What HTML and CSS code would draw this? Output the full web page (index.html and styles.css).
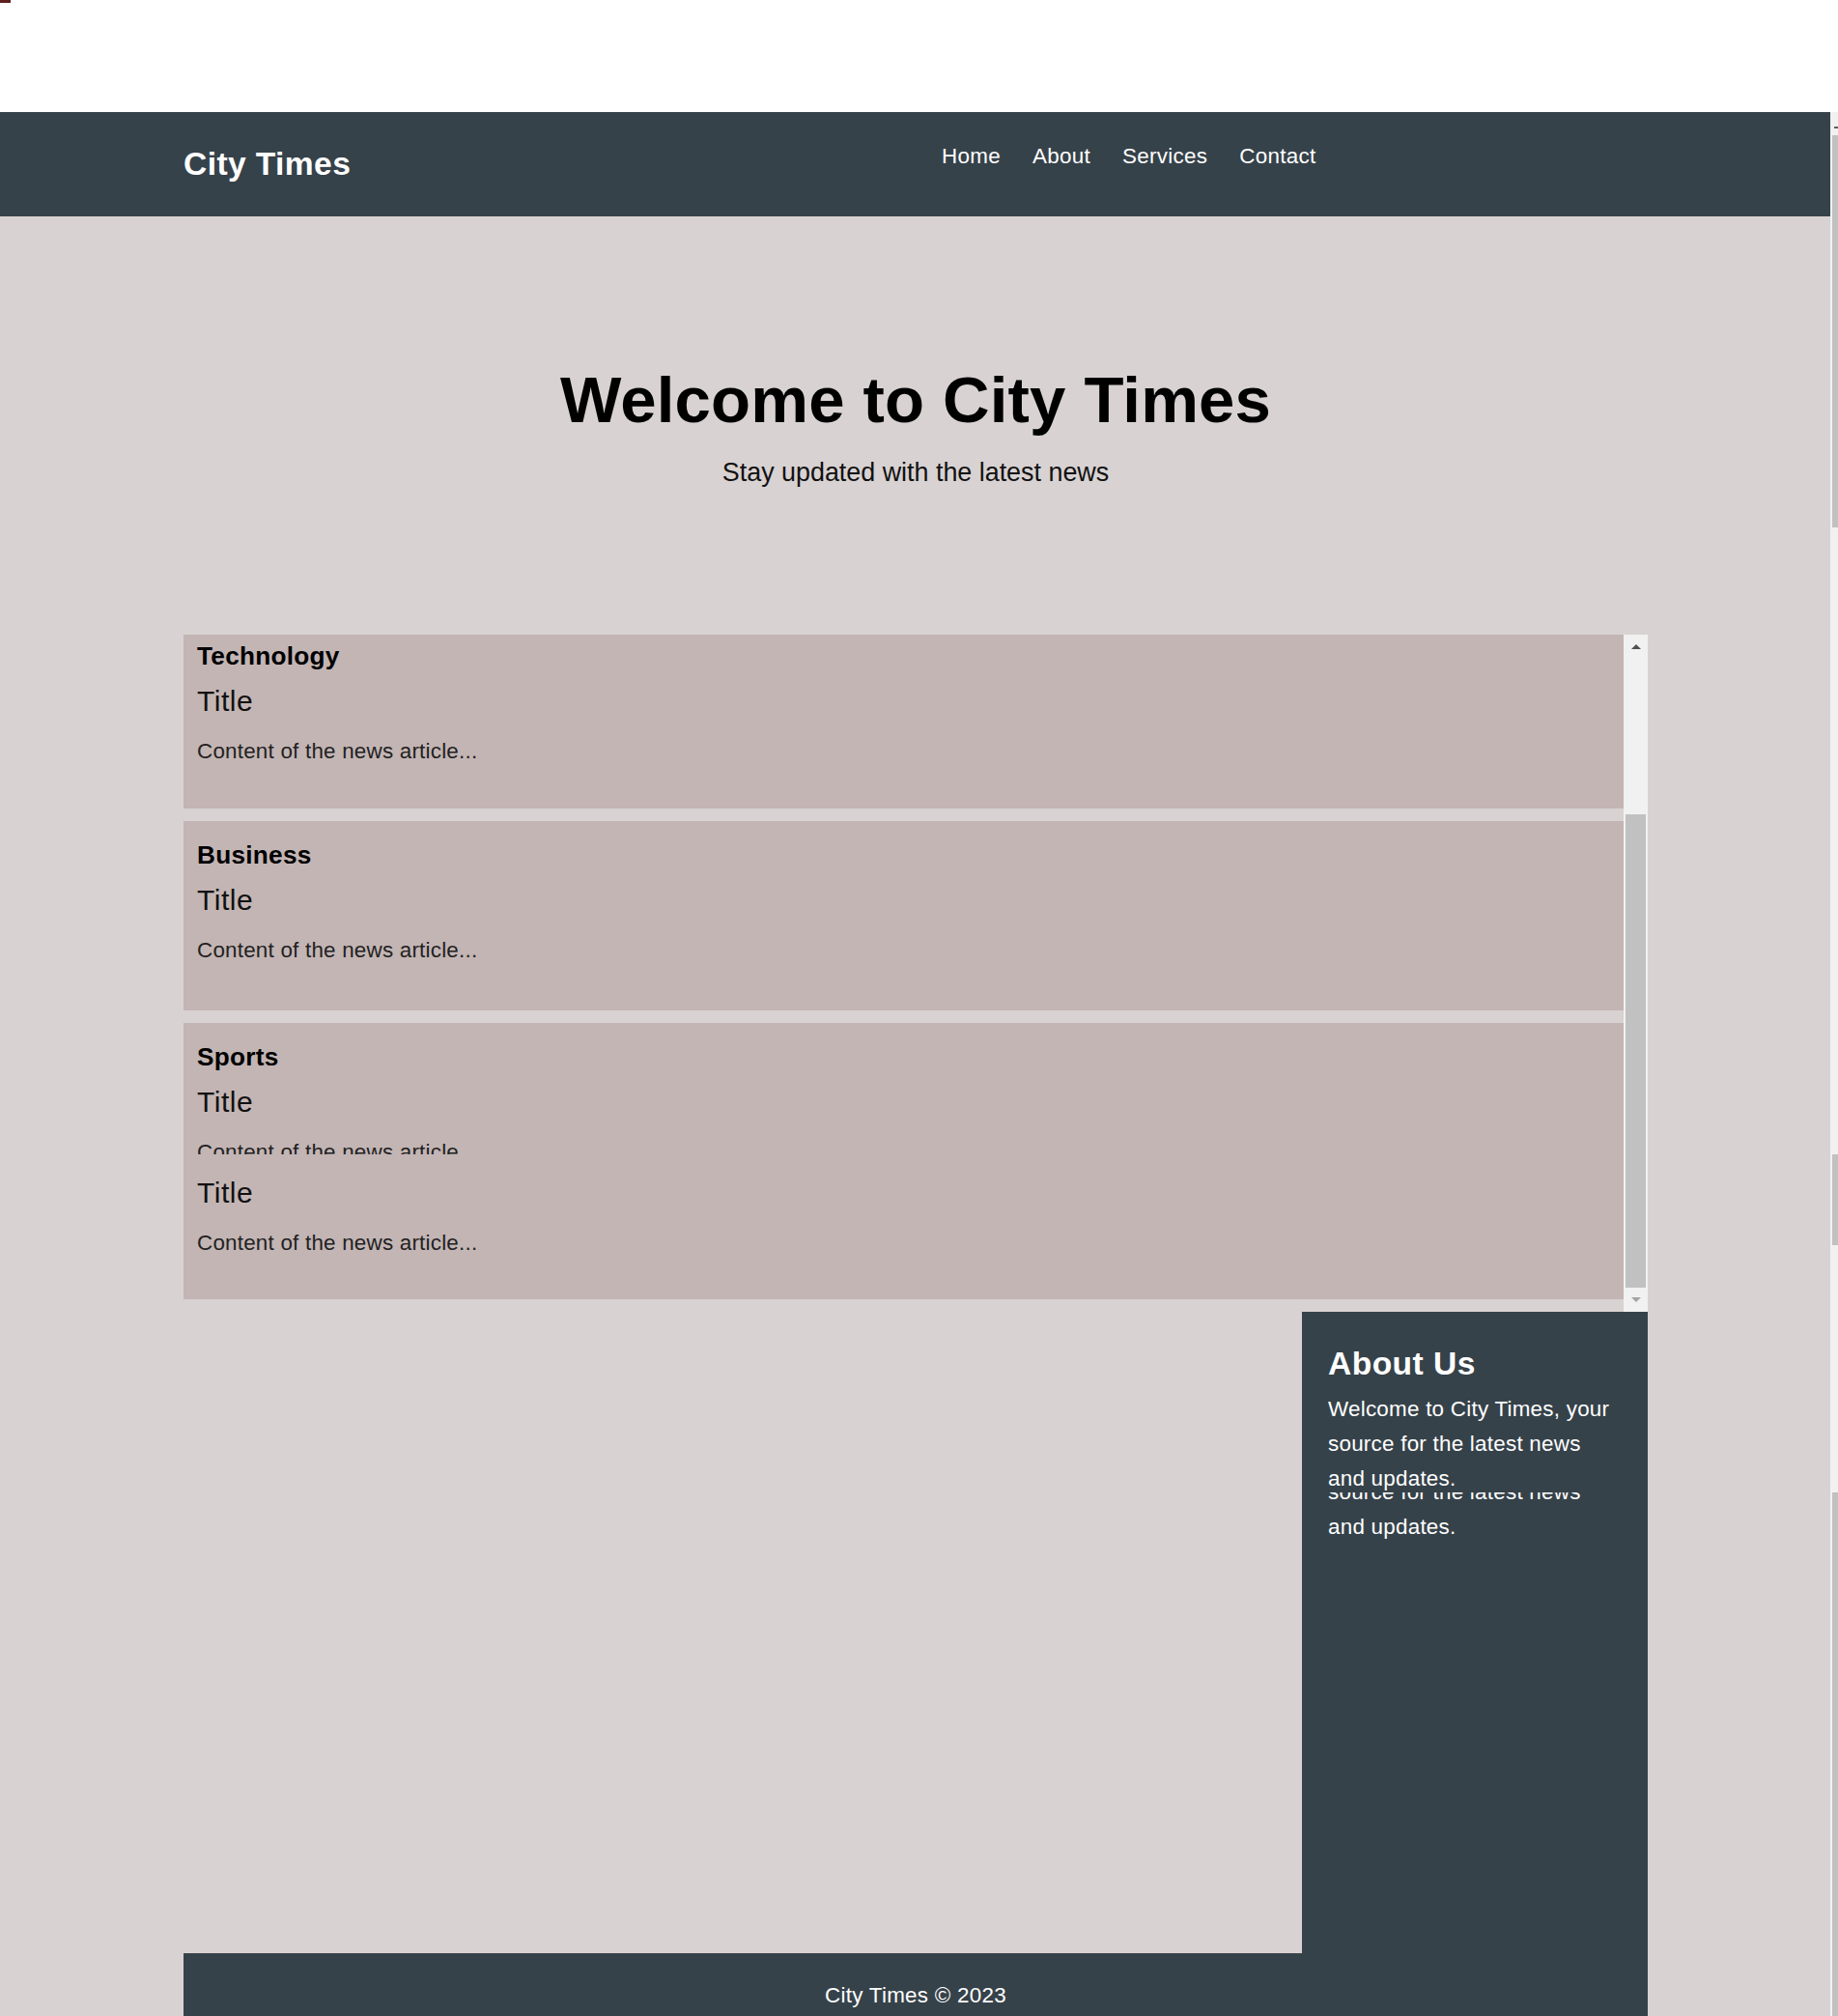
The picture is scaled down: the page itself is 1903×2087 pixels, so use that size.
FILE: index.html
```html
<!DOCTYPE html>
<html lang="en">
<head>
<meta charset="utf-8">
<title>City Times</title>
<link rel="stylesheet" href="styles.css">
</head>
<body>
<div class="topband"><span class="topband-mark"></span></div>
<div class="frame">
  <div class="page">
    <header class="site-header">
      <div class="header-inner">
        <div class="logo">City Times</div>
        <nav>
          <ul class="nav">
            <li><a href="#">Home</a></li>
            <li><a href="#">About</a></li>
            <li><a href="#">Services</a></li>
            <li><a href="#">Contact</a></li>
          </ul>
        </nav>
      </div>
    </header>
    <main class="container">
      <section class="hero">
        <h1 class="hero-title">Welcome to City Times</h1>
        <p class="hero-sub">Stay updated with the latest news</p>
      </section>

      <div class="feed">
        <div class="feed-list">
          <article class="card card--scrolled">
            <h3 class="card-cat">Technology</h3>
            <h2 class="card-title">Title</h2>
            <p class="card-text">Content of the news article...</p>
          </article>
          <article class="card">
            <h3 class="card-cat">Business</h3>
            <h2 class="card-title">Title</h2>
            <p class="card-text">Content of the news article...</p>
          </article>
          <article class="card card--last">
            <h3 class="card-cat">Sports</h3>
            <h2 class="card-title">Title</h2>
            <div class="card-clip"><p class="card-text">Content of the news article...</p></div>
            <h2 class="card-title">Title</h2>
            <p class="card-text">Content of the news article...</p>
          </article>
        </div>
        <div class="scrollbar">
          <div class="sb-btn"><span class="sb-arrow sb-arrow--up"></span></div>
          <div class="sb-thumb"></div>
          <div class="sb-btn"><span class="sb-arrow sb-arrow--down"></span></div>
        </div>
      </div>

      <div class="lower">
        <aside class="about">
          <h2 class="about-title">About Us</h2>
          <p class="about-text">Welcome to City Times, your source for the latest news and updates.</p>
          <div class="about-ghost"><p class="about-text about-text--ghost">source for the latest news<br>and updates.</p></div>
        </aside>
      </div>

      <footer class="site-footer">City Times © 2023</footer>
    </main>
  </div>
  <div class="page-scroll">
    <span class="ps-arrow"></span>
    <span class="ps-thumb ps-thumb--a"></span>
    <span class="ps-thumb ps-thumb--b"></span>
    <span class="ps-thumb ps-thumb--c"></span>
  </div>
</div>
</body>
</html>
```

FILE: styles.css
```css
html, body {
  margin: 0;
  padding: 0;
  height: 2087px;
  overflow: hidden;
  background: #ffffff;
  font-family: "Liberation Sans", Arial, sans-serif;
  color: #000;
}

/* top white band */
.topband {
  height: 116px;
  background: #ffffff;
}
.topband-mark {
  display: block;
  width: 11px;
  height: 3px;
  background: #5e1f1f;
}

.frame {
  display: flex;
  height: 1971px;
}

.page {
  width: 1895px;
  background: #d8d2d2;
  display: flex;
  flex-direction: column;
}

/* header */
.site-header {
  height: 108px;
  background: #36424a;
  color: #ffffff;
}
.header-inner {
  display: grid;
  grid-template-columns: 785px auto;
  align-items: start;
  margin-left: 190px;
}
.logo {
  margin-top: 34px;
  font-size: 33.6px;
  line-height: 40px;
  font-weight: 700;
  letter-spacing: 0.4px;
}
.nav {
  list-style: none;
  margin: 32px 0 0;
  padding: 0;
  display: flex;
  gap: 33px;
}
.nav a {
  color: #ffffff;
  text-decoration: none;
  font-size: 22.4px;
  line-height: 27px;
  letter-spacing: 0.3px;
  display: block;
}

/* main container */
.container {
  margin: 0 189px 0 190px;
  display: flex;
  flex-direction: column;
}

.hero {
  padding: 150px 0 152px;
  text-align: center;
}
.hero-title {
  margin: 0 0 18px;
  font-size: 67.2px;
  line-height: 80.64px;
  font-weight: 700;
  letter-spacing: 0.15px;
  color: #000;
}
.hero-sub {
  margin: 0;
  font-size: 26.88px;
  line-height: 32px;
  color: #111;
}

/* feed with its scrollbar */
.feed {
  display: flex;
  height: 701px;
}
.feed-list {
  flex: 1;
  overflow: hidden;
}
.card {
  background: #c3b5b4;
  padding: 20px 14px 49px;
  margin-bottom: 13px;
}
.card--scrolled {
  padding-top: 7px;
  padding-bottom: 46px;
}
.card--last {
  padding-bottom: 45px;
}
.card-cat {
  margin: 0 0 14px;
  font-size: 26.2px;
  line-height: 30px;
  font-weight: 700;
  letter-spacing: 0.27px;
  color: #000;
}
.card-title {
  margin: 0 0 20px;
  font-size: 30px;
  line-height: 36px;
  font-weight: 400;
  letter-spacing: 0.5px;
  color: #111;
}
.card-text {
  margin: 0;
  font-size: 22.4px;
  line-height: 27px;
  letter-spacing: 0.22px;
  color: #222;
}
.card-clip {
  height: 16px;
  overflow: hidden;
  margin-bottom: 22px;
}

.scrollbar {
  width: 25px;
  background: #f1f1f1;
  display: flex;
  flex-direction: column;
}
.sb-btn {
  height: 25px;
  display: flex;
  align-items: center;
  justify-content: center;
}
.sb-arrow {
  width: 0;
  height: 0;
  border-left: 5.5px solid transparent;
  border-right: 5.5px solid transparent;
}
.sb-arrow--up {
  border-bottom: 5px solid #505050;
  margin-top: 1px;
}
.sb-arrow--down {
  border-top: 5px solid #a3a3a3;
  margin-top: 1px;
}
.sb-thumb {
  margin: 161px 2px 0;
  height: 490px;
  background: #c1c1c1;
}

/* lower row: about box */
.lower {
  display: grid;
  grid-template-columns: 1fr 358px;
  height: 664px;
}
.about {
  grid-column: 2;
  background: #36424a;
  color: #ffffff;
  padding: 34px 0 0 27px;
  overflow: hidden;
}
.about-title {
  margin: 0 0 9px;
  font-size: 33.6px;
  line-height: 40px;
  font-weight: 700;
  letter-spacing: 0.45px;
}
.about-text {
  margin: 0;
  max-width: 298px;
  font-size: 22.4px;
  line-height: 36.2px;
  letter-spacing: 0.25px;
}
.about-ghost {
  margin-top: -4.7px;
  height: 54.5px;
  overflow: hidden;
}
.about-text--ghost {
  margin-top: -17.9px;
}

/* footer */
.site-footer {
  height: 65px;
  box-sizing: border-box;
  padding-top: 26px;
  background: #36424a;
  color: #ffffff;
  text-align: center;
  font-size: 22.4px;
  line-height: 35.84px;
  letter-spacing: 0.28px;
}

/* page scrollbar strip on the right */
.page-scroll {
  width: 8px;
  background: #f1f1f1;
  display: flex;
  flex-direction: column;
}
.ps-arrow {
  display: block;
  margin: 15px 0 0 4px;
  width: 4px;
  height: 2px;
  background: #606060;
}
.ps-thumb {
  display: block;
  margin-left: 2px;
  width: 6px;
  background: #c1c1c1;
}
.ps-thumb--a {
  margin-top: 7px;
  height: 406px;
}
.ps-thumb--b {
  margin-top: 649px;
  height: 94px;
}
.ps-thumb--c {
  margin-top: 256px;
  flex: 1;
}
```
